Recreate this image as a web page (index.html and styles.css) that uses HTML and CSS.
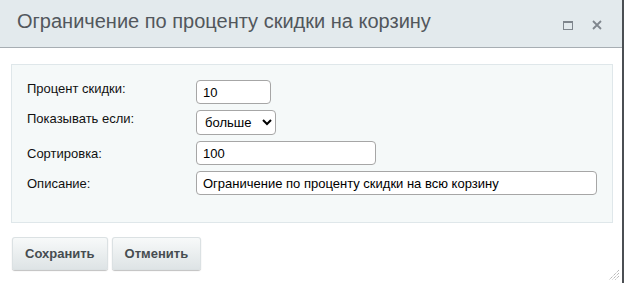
FILE: index.html
```html
<!DOCTYPE html>
<html lang="ru">
<head>
  <meta charset="UTF-8">
  <title>Ограничение по проценту скидки на корзину</title>
  <link rel="stylesheet" href="styles.css">
</head>
<body>

  <div class="dialog">

    <!-- HEADER -->
    <div class="head">
      <span class="title">Ограничение по проценту скидки на корзину</span>
      <div class="head-icons">
        <svg class="icon" width="10" height="9" viewBox="0 0 10 9">
          <rect x="0.5" y="1" width="9" height="7.5" fill="none" stroke="#7f868d" stroke-width="1"/>
          <line x1="0" y1="1" x2="10" y2="1" stroke="#7f868d" stroke-width="2"/>
        </svg>
        <svg class="icon" width="10" height="10" viewBox="0 0 10 10">
          <path d="M1 1 L9 9 M9 1 L1 9" stroke="#7f868d" stroke-width="1.8" fill="none"/>
        </svg>
      </div>
    </div>

    <!-- FORM -->
    <div class="content">
      <div class="panel">
        <div class="form-grid">
          <label class="top">Процент скидки:</label>
          <div><input type="text" class="field w-small" value="10"></div>

          <label class="top">Показывать если:</label>
          <div>
            <select class="field w-select">
              <option>больше</option>
              <option>меньше</option>
            </select>
          </div>

          <label>Сортировка:</label>
          <div><input type="text" class="field w-mid" value="100"></div>

          <label>Описание:</label>
          <div><input type="text" class="field w-wide" value="Ограничение по проценту скидки на всю корзину"></div>
        </div>
      </div>

      <div class="buttons">
        <button class="btn">Сохранить</button>
        <button class="btn">Отменить</button>
      </div>
    </div>

    <!-- RESIZE GRIP -->
    <svg class="grip" width="12" height="16" viewBox="0 0 12 16">
      <path d="M11 5 L1 15 M11 8 L4 15 M11 11 L7 15" stroke="#9a9a9a" stroke-width="1" stroke-dasharray="1 1" fill="none"/>
    </svg>

  </div>

</body>
</html>
```

FILE: styles.css
```css
body {
  margin: 0;
  font-family: "Liberation Sans", Arial, sans-serif;
  background: #fff;
}

.dialog {
  position: relative;
  width: 624px;
  height: 283px;
  box-sizing: border-box;
  border-right: 2px solid #4b4f53;
  background: #fff;
}

/* Header */
.head {
  height: 48px;
  box-sizing: border-box;
  background: #e3eaed;
  border-bottom: 1px solid #a7aeb3;
  display: flex;
  align-items: flex-start;
  padding: 10px 20px 0 17px;
}

.title {
  font-size: 20px;
  color: #52575c;
  line-height: 23px;
}

.head-icons {
  margin-left: auto;
  display: flex;
  align-items: center;
  gap: 19px;
  padding-top: 10px;
}

.icon {
  display: block;
}

/* Content */
.content {
  padding: 16px 10px 0 11px;
}

.panel {
  width: 602px;
  box-sizing: border-box;
  background: #f5f9f9;
  border: 1px solid #dfe7ea;
  padding: 15px 15px 27px 15px;
}

.form-grid {
  display: grid;
  grid-template-columns: 169px 1fr;
  row-gap: 6px;
  align-items: center;
}

.form-grid label {
  font-size: 13px;
  color: #111;
}

.form-grid label.top {
  align-self: start;
  padding-top: 1px;
}

.field {
  display: block;
  height: 24px;
  box-sizing: border-box;
  border: 1px solid #a6a6a6;
  border-radius: 4px;
  background: #fff;
  padding: 0 6px;
  font-family: "Liberation Sans", Arial, sans-serif;
  font-size: 13px;
  color: #000;
  margin: 0;
}

select.field {
  height: 25px;
  padding: 0 2px 0 4px;
}

.w-small { width: 75px; }
.w-select { width: 80px; }
.w-mid { width: 180px; }
.w-wide { width: 401px; }

/* Buttons */
.buttons {
  display: flex;
  gap: 4px;
  margin-top: 14px;
  padding-left: 1px;
}

.btn {
  height: 33px;
  padding: 0 13px;
  margin: 0;
  border: none;
  border-radius: 3px;
  background: linear-gradient(#f8fafa, #dde3e5);
  box-shadow: 0 1px 1px rgba(0, 0, 0, 0.25), inset 0 0 0 1px #dbe1e3;
  font-family: "Liberation Sans", Arial, sans-serif;
  font-size: 13px;
  font-weight: bold;
  color: #464c50;
}

.grip {
  position: absolute;
  right: 2px;
  bottom: 2px;
}
```
